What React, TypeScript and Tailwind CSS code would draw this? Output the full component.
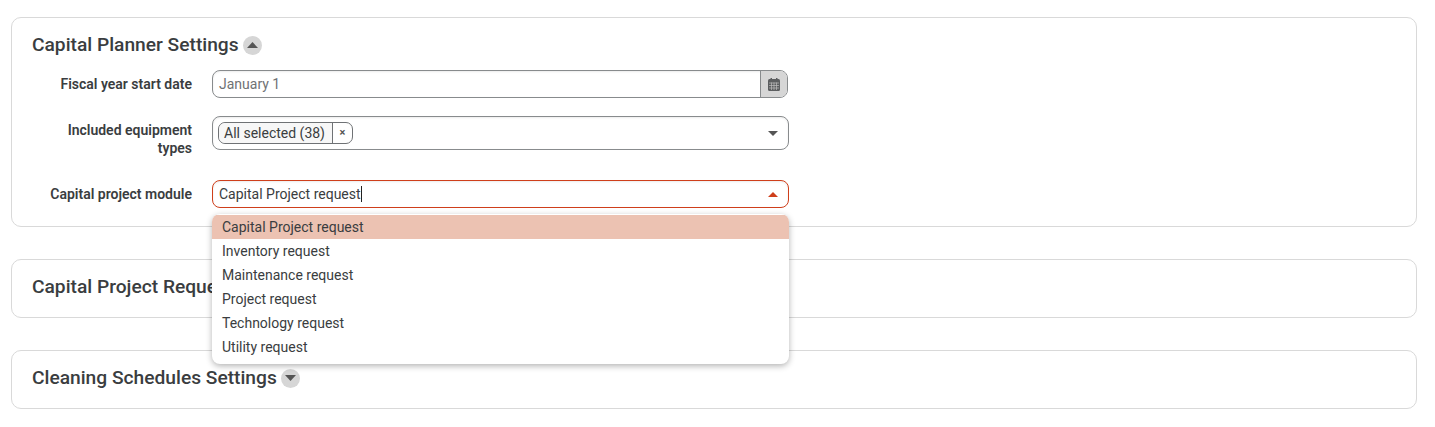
import React from 'react';

const options = [
  'Capital Project request',
  'Inventory request',
  'Maintenance request',
  'Project request',
  'Technology request',
  'Utility request',
];

const Toggle = ({ up }: { up?: boolean }) => (
  <span className="ml-[4px] flex h-[19px] w-[19px] items-center justify-center rounded-full bg-[#d6d6d6]">
    <svg width="11" height="6" viewBox="0 0 11 6">
      <path d={up ? 'M5.5 0 L11 6 L0 6 Z' : 'M0 0 L11 0 L5.5 6 Z'} fill="#555" />
    </svg>
  </span>
);

const Title = ({ children, up }: { children: React.ReactNode; up?: boolean }) => (
  <div className="flex h-[20px] items-center">
    <h2 className="text-[19.2px] font-medium leading-[20px] text-[#3a3d40]">{children}</h2>
    <Toggle up={up} />
  </div>
);

const Label = ({ children, className = '' }: { children: React.ReactNode; className?: string }) => (
  <label className={`w-[160px] pl-[10px] text-right text-[14px] font-semibold leading-[18px] text-[#3a3d40] ${className}`}>{children}</label>
);

// calendar glyph with the light grid lines of the reference
const CalendarIcon = () => (
  <svg width="12" height="13" viewBox="0 0 12 13">
    <rect x="0" y="1" width="12" height="12" rx="1.5" fill="#5c5e60" />
    <rect x="2.5" y="0" width="1.5" height="2.5" fill="#5c5e60" />
    <rect x="8" y="0" width="1.5" height="2.5" fill="#5c5e60" />
    <path d="M1 5 H11 M1 7.5 H11 M1 10 H11 M3.5 4.5 V12 M6 4.5 V12 M8.5 4.5 V12" stroke="#bdbdbd" strokeWidth="0.7" fill="none" />
  </svg>
);

export default function App() {
  return (
    <div className="min-h-[427px] bg-white pt-[17px] pl-[11px] pr-[18px] font-['Roboto',sans-serif]">
      <div className="h-[210px] rounded-[10px] border border-[#d9d9d9] pt-[17px] pl-[20px]">
        <Title up>Capital Planner Settings</Title>
        <div className="mt-[15px] flex items-center">
          <Label>Fiscal year start date</Label>
          <div className="ml-[20px] flex h-[28px] w-[576px] overflow-hidden rounded-[8px] border border-[#888b8d] shadow-[inset_0_1px_2px_rgba(0,0,0,0.08)]">
            <div className="flex-1 pl-[6px] text-[14px] leading-[26px] text-[#6f7275]">January 1</div>
            <div className="flex w-[27px] items-center justify-center border-l border-[#888b8d] bg-[#d6d6d6]">
              <CalendarIcon />
            </div>
          </div>
        </div>
        <div className="mt-[18px] flex items-start">
          <Label className="pt-[5px]">Included equipment types</Label>
          <div className="ml-[20px] flex h-[34px] w-[577px] items-center justify-between rounded-[8px] border border-[#888b8d] pl-[5px] pr-[10px] shadow-[inset_0_1px_2px_rgba(0,0,0,0.08)]">
            <div className="flex h-[22px] items-center rounded-[7px] border border-[#6f7275] text-[14px] text-[#3a3d40]">
              <span className="flex h-full w-[113px] items-center rounded-l-[7px] bg-[#f7f7f7] pl-[5px]">All selected (38)</span>
              <span className="flex h-full w-[20px] items-center justify-center border-l border-[#6f7275] text-[11px] font-bold text-[#555]">×</span>
            </div>
            <svg width="10" height="5" viewBox="0 0 10 5"><path d="M0 0 L10 0 L5 5 Z" fill="#555" /></svg>
          </div>
        </div>
        <div className="mt-[23px] flex items-center">
          <Label>Capital project module</Label>
          <div className="relative ml-[20px] w-[577px]">
            <div className="flex h-[28px] items-center justify-between rounded-[8px] border border-[#cf3f1b] pl-[6px] pr-[10px] shadow-[inset_0_1px_2px_rgba(0,0,0,0.08)]">
              <span className="flex items-center text-[14px] text-[#3a3d40]">
                Capital Project request
                <span className="h-[16px] w-px bg-[#222]" />
              </span>
              <svg width="10" height="5" viewBox="0 0 10 5"><path d="M5 0 L10 5 L0 5 Z" fill="#cf3f1b" /></svg>
            </div>
            <ul className="absolute left-0 top-[34px] z-10 h-[150px] w-full overflow-hidden rounded-[8px] bg-white pt-[1px] text-[14px] text-[#3a3d40] shadow-[0_2px_6px_rgba(0,0,0,0.3)]">
              {options.map((o, i) => (
                <li key={o} className={`h-[24px] pl-[10px] leading-[24px] ${i === 0 ? 'bg-[#ecc2b2]' : ''}`}>{o}</li>
              ))}
            </ul>
          </div>
        </div>
      </div>
      <div className="mt-[32px] h-[59px] rounded-[10px] border border-[#d9d9d9] pt-[17px] pl-[20px]">
        <Title>Capital Project Request Settings</Title>
      </div>
      <div className="mt-[32px] h-[59px] rounded-[10px] border border-[#d9d9d9] pt-[17px] pl-[20px]">
        <Title>Cleaning Schedules Settings</Title>
      </div>
    </div>
  );
}
